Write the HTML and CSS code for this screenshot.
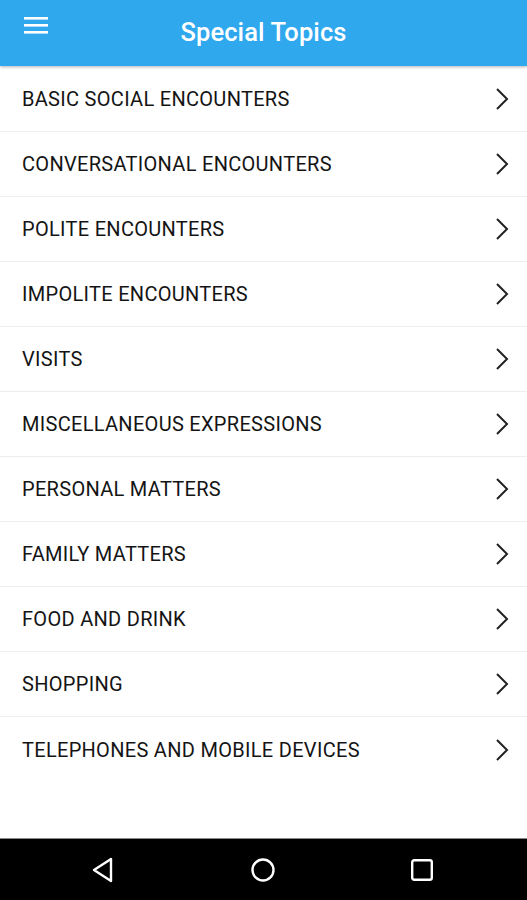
FILE: index.html
```html
<!DOCTYPE html>
<html>
<head>
<meta charset="utf-8">
<link rel="stylesheet" href="styles.css">
</head>
<body>
<div class="app">
  <header class="topbar">
    <div class="menu">
      <svg width="24" height="18" viewBox="0 0 24 18"><rect x="0" y="1" width="24" height="2.6" fill="#fff"/><rect x="0" y="8" width="24" height="2.6" fill="#fff"/><rect x="0" y="15" width="24" height="2.6" fill="#fff"/></svg>
    </div>
    <h1 class="title">Special Topics</h1>
  </header>
  <ul class="list">
    <li class="row"><span>BASIC SOCIAL ENCOUNTERS</span><svg class="chev" width="14" height="24" viewBox="0 0 14 24"><path d="M2 2 L12 12 L2 22" fill="none" stroke="#222" stroke-width="2"/></svg></li>
    <li class="row"><span>CONVERSATIONAL ENCOUNTERS</span><svg class="chev" width="14" height="24" viewBox="0 0 14 24"><path d="M2 2 L12 12 L2 22" fill="none" stroke="#222" stroke-width="2"/></svg></li>
    <li class="row"><span>POLITE ENCOUNTERS</span><svg class="chev" width="14" height="24" viewBox="0 0 14 24"><path d="M2 2 L12 12 L2 22" fill="none" stroke="#222" stroke-width="2"/></svg></li>
    <li class="row"><span>IMPOLITE ENCOUNTERS</span><svg class="chev" width="14" height="24" viewBox="0 0 14 24"><path d="M2 2 L12 12 L2 22" fill="none" stroke="#222" stroke-width="2"/></svg></li>
    <li class="row"><span>VISITS</span><svg class="chev" width="14" height="24" viewBox="0 0 14 24"><path d="M2 2 L12 12 L2 22" fill="none" stroke="#222" stroke-width="2"/></svg></li>
    <li class="row"><span>MISCELLANEOUS EXPRESSIONS</span><svg class="chev" width="14" height="24" viewBox="0 0 14 24"><path d="M2 2 L12 12 L2 22" fill="none" stroke="#222" stroke-width="2"/></svg></li>
    <li class="row"><span>PERSONAL MATTERS</span><svg class="chev" width="14" height="24" viewBox="0 0 14 24"><path d="M2 2 L12 12 L2 22" fill="none" stroke="#222" stroke-width="2"/></svg></li>
    <li class="row"><span>FAMILY MATTERS</span><svg class="chev" width="14" height="24" viewBox="0 0 14 24"><path d="M2 2 L12 12 L2 22" fill="none" stroke="#222" stroke-width="2"/></svg></li>
    <li class="row"><span>FOOD AND DRINK</span><svg class="chev" width="14" height="24" viewBox="0 0 14 24"><path d="M2 2 L12 12 L2 22" fill="none" stroke="#222" stroke-width="2"/></svg></li>
    <li class="row"><span>SHOPPING</span><svg class="chev" width="14" height="24" viewBox="0 0 14 24"><path d="M2 2 L12 12 L2 22" fill="none" stroke="#222" stroke-width="2"/></svg></li>
    <li class="row last"><span>TELEPHONES AND MOBILE DEVICES</span><svg class="chev" width="14" height="24" viewBox="0 0 14 24"><path d="M2 2 L12 12 L2 22" fill="none" stroke="#222" stroke-width="2"/></svg></li>
  </ul>
  <nav class="navbar">
    <svg width="24" height="28" viewBox="0 0 24 28"><path d="M20 3 L20 25 L3 14 Z" fill="none" stroke="#fff" stroke-width="2.4" stroke-linejoin="round"/></svg>
    <svg width="26" height="26" viewBox="0 0 26 26"><circle cx="13" cy="13" r="10.5" fill="none" stroke="#fff" stroke-width="2.4"/></svg>
    <svg width="24" height="24" viewBox="0 0 24 24"><rect x="2.2" y="2.2" width="19.6" height="19.6" rx="2" fill="none" stroke="#fff" stroke-width="2.4"/></svg>
  </nav>
</div>
</body>
</html>
```

FILE: styles.css
```css
* { box-sizing: border-box; }
html, body { margin: 0; padding: 0; }
body { font-family: Roboto, "Liberation Sans", sans-serif; background: #fff; }
.app { width: 527px; height: 900px; display: flex; flex-direction: column; }
.topbar {
  height: 66px;
  background: #2fa8ee;
  position: relative;
  display: flex;
  align-items: center;
  justify-content: center;
  padding-bottom: 3px;
  box-shadow: 0 1px 3px rgba(0,0,0,0.3);
  z-index: 1;
}
.menu { position: absolute; left: 24px; top: 16px; line-height: 0; }
.title { margin: 0; color: #fff; font-size: 25.5px; font-weight: 500; letter-spacing: 0.1px; }
.list { list-style: none; margin: 1px 0 0; padding: 0; flex: 1; }
.row {
  height: 65px;
  display: flex;
  align-items: center;
  justify-content: space-between;
  padding: 0 18px 0 22px;
  border-bottom: 1px solid #ededed;
  font-size: 20px;
  letter-spacing: 0.3px;
  color: #141414;
}
.row.last { border-bottom: none; }
.chev { display: block; }
.navbar {
  height: 62px;
  background: #000;
  border-top: 1px solid #8a8a8a;
  display: flex;
  align-items: center;
  justify-content: space-between;
  padding: 0 93px 0 91px;
}
.navbar svg { display: block; }
```
